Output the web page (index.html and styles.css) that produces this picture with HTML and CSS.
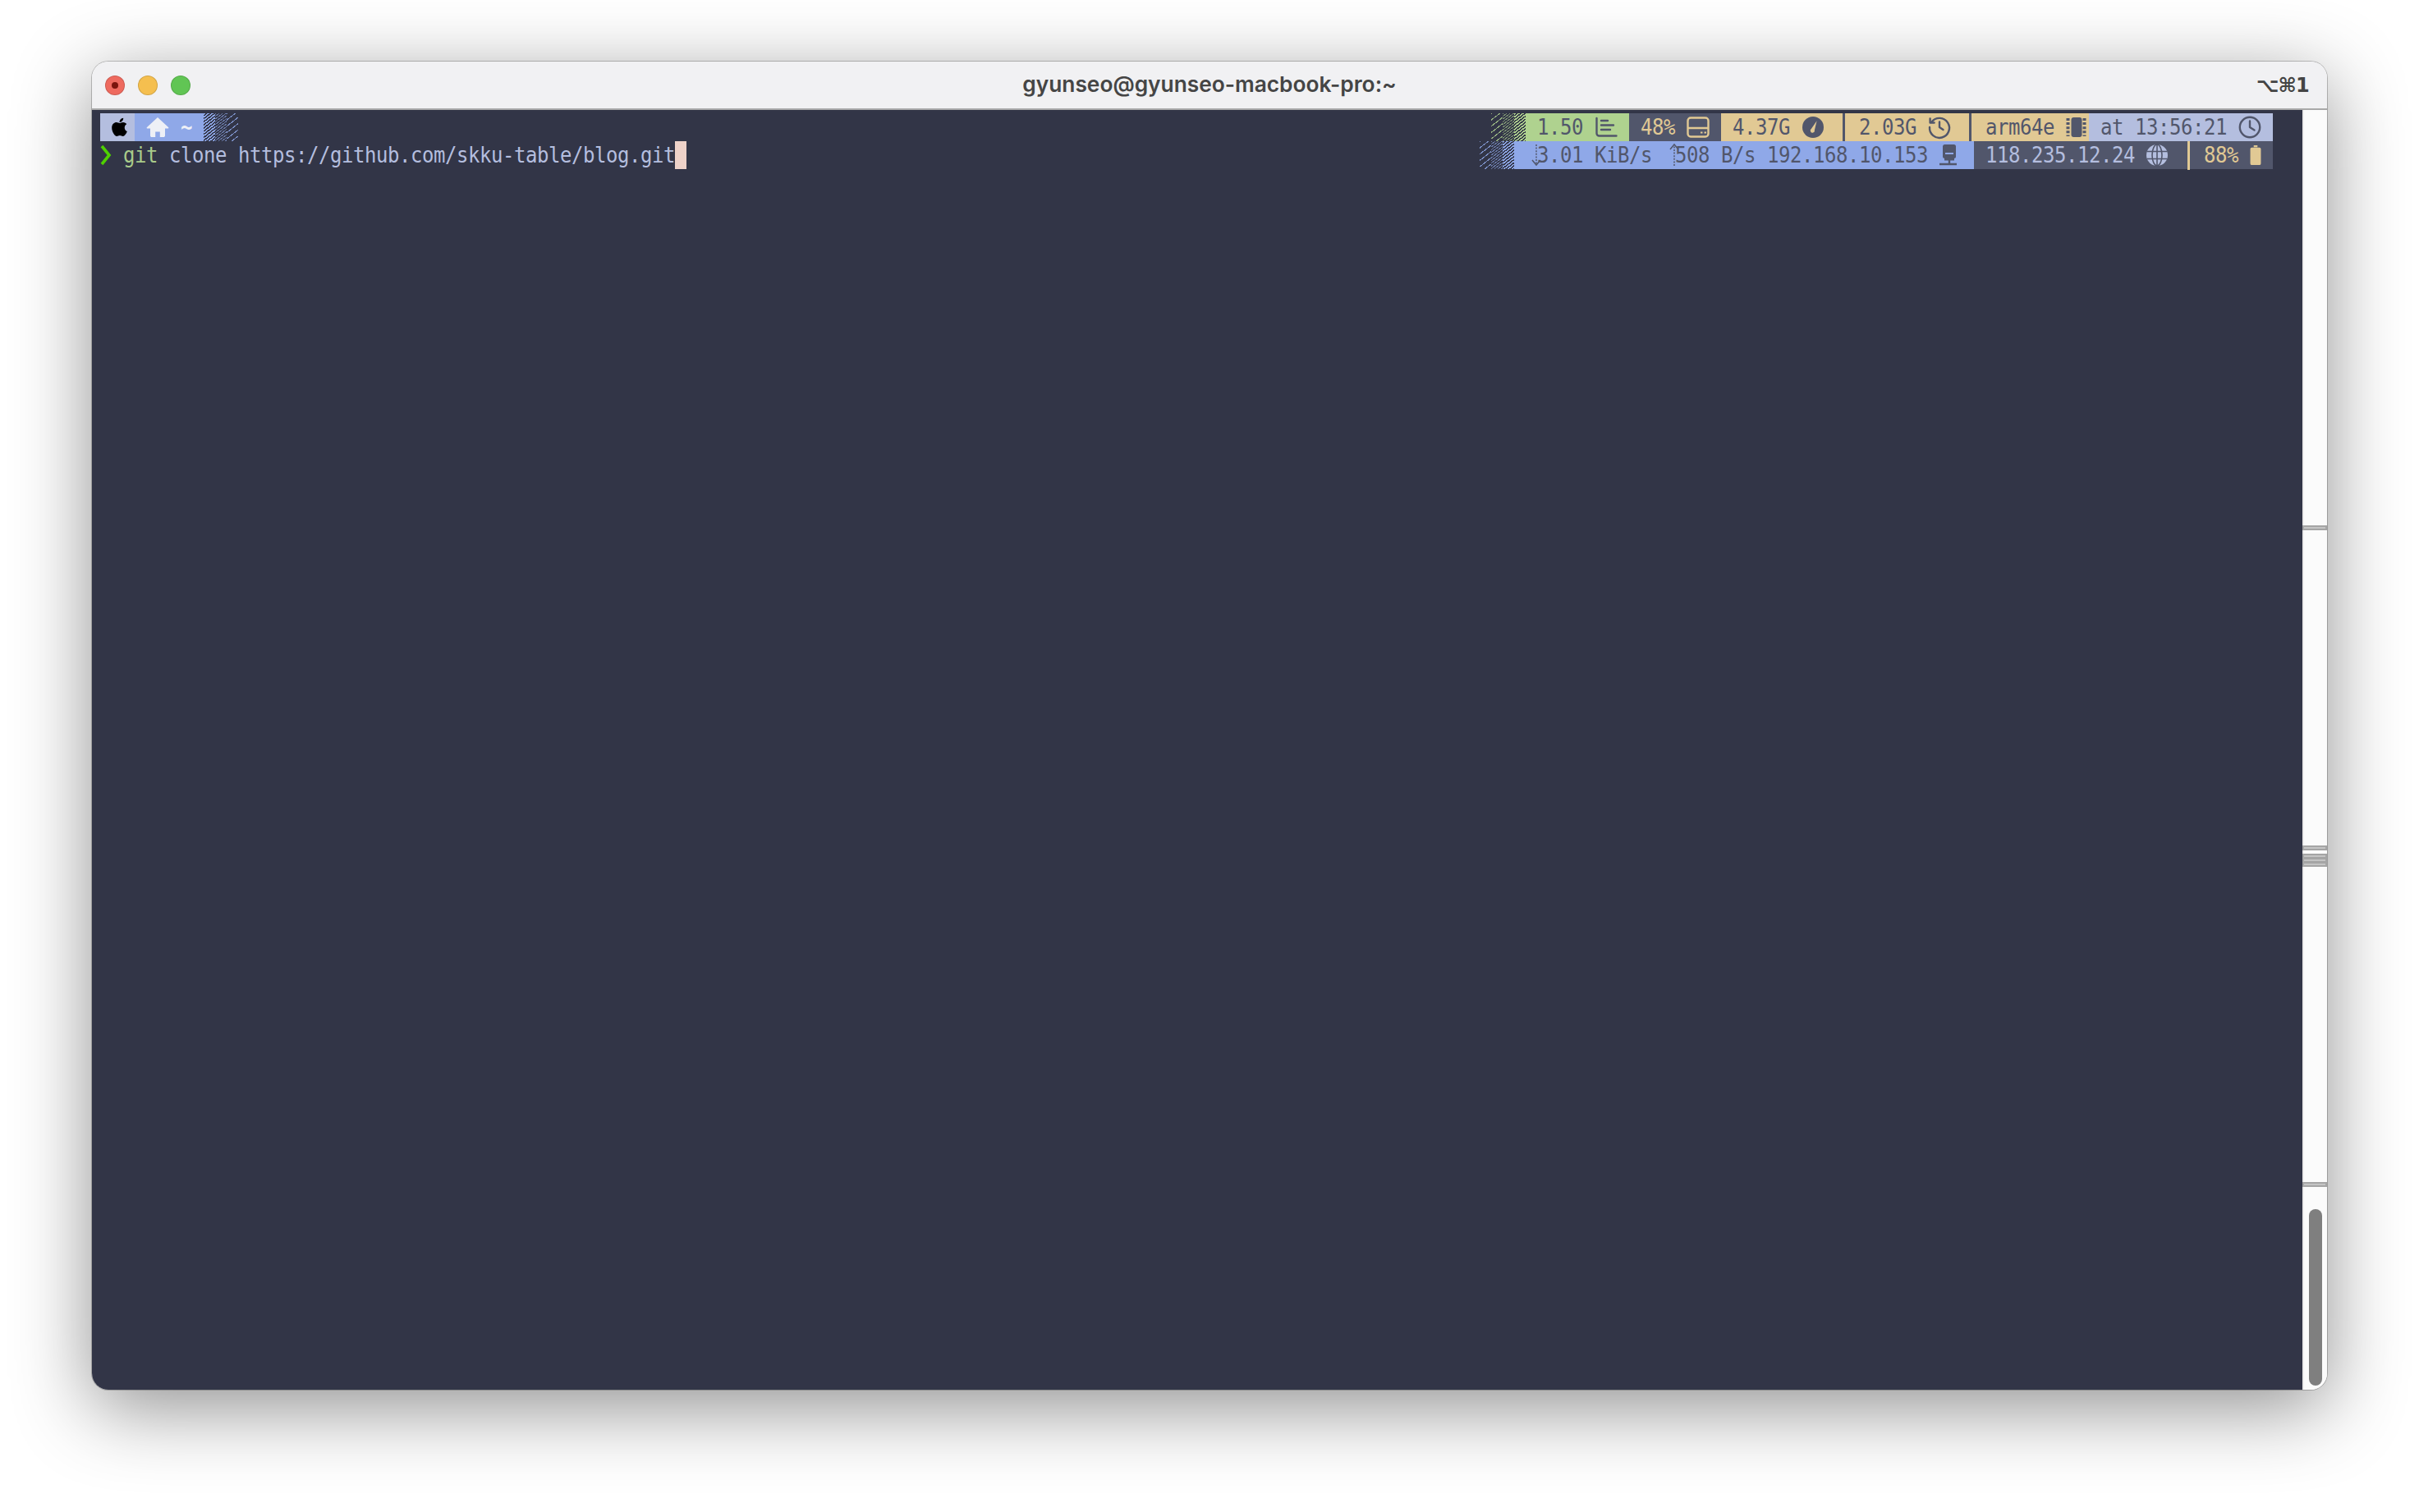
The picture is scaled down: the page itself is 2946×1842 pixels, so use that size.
FILE: index.html
```html
<!DOCTYPE html>
<html lang="en">
<head>
<meta charset="utf-8">
<title>gyunseo@gyunseo-macbook-pro:~</title>
<link rel="stylesheet" href="styles.css">
</head>
<body>
<main class="window">
  <header class="titlebar">
    <div class="lights">
      <span class="light red"></span>
      <span class="light yellow"></span>
      <span class="light green-light"></span>
    </div>
    <div class="title">gyunseo@gyunseo-macbook-pro:~</div>
    <div class="shortcut">⌥⌘1</div>
  </header>
  <div class="body">
    <section class="term">
      <div class="row">
        <div class="left">
          <div class="seg lav dark-text">
            <svg class="ico apple" viewBox="0 0 384 512"><path fill="#000" d="M318.7 268.7c-.2-36.7 16.4-64.4 50-84.8-18.8-26.9-47.2-41.7-84.7-44.6-35.5-2.8-74.3 20.7-88.5 20.7-15 0-49.4-19.7-76.4-19.7C63.3 141.2 4 184.8 4 273.5q0 39.3 14.4 81.2c12.8 36.7 59 126.7 107.2 125.2 25.2-.6 43-17.9 75.8-17.9 31.8 0 48.3 17.9 76.4 17.9 48.6-.7 90.4-82.5 102.6-119.3-65.2-30.7-61.7-90-61.7-91.9zm-56.6-164.2c27.3-32.4 24.8-61.9 24-72.5-24.1 1.4-52 16.4-67.9 34.9-17.5 19.8-27.8 44.3-25.6 71.9 26.1 2 49.9-11.4 69.5-34.3z"/></svg>
          </div>
          <div class="seg blue">
            <svg class="ico" viewBox="0 0 28 28"><path fill="#eef0f6" d="M14 2 1 13.900c-.7.7-.3 1.600.6 1.600H5v8.700c0 1 .8 1.800 1.800 1.800h4.400v-6.500h5.600V26h4.400c1 0 1.800-.8 1.800-1.800v-8.700h3.400c.9 0 1.300-.9.6-1.600z"/></svg>
            <span class="tilde">~</span>
          </div>
          <i class="hatch dense c-blue"></i><i class="hatch medium c-blue"></i><i class="hatch sparse c-blue"></i>
        </div>
        <div class="right">
          <i class="hatch sparse c-green"></i><i class="hatch medium c-green"></i><i class="hatch dense c-green"></i>
          <div class="seg green dark-text">
            <span>1.50</span>
            <svg class="ico" viewBox="0 0 28 28" fill="none" stroke="#51566b" stroke-width="2.4" stroke-linecap="round"><path d="M2.500 3v18.500a3 3 0 0 0 3 3h21"/><path d="M8 6h8M8 11.500h15M8 17h11"/></svg>
          </div>
          <div class="seg slate tan-text">
            <span>48%</span>
            <svg class="ico" viewBox="0 0 28 28" fill="none" stroke="#e1c994" stroke-width="2.4"><rect x="1.500" y="2.500" width="25" height="23" rx="3.500"/><path d="M1.500 15h25"/><path stroke-width="2.2" d="M17 20.500h2.500M21.500 20.500H24"/></svg>
          </div>
          <div class="seg tan flush dark-text">
            <span>4.37G</span>
            <svg class="ico" viewBox="0 0 28 28"><circle cx="14" cy="14" r="13" fill="#51566b"/><path fill="#e1c994" d="M18.600 6.300 15.900 17.400a2.600 2.600 0 1 1-3.900-1.600z"/></svg>
            <b class="divider on-tan"><u></u></b>
            <span>2.03G</span>
            <svg class="ico" viewBox="0 0 28 28" fill="none" stroke="#51566b" stroke-width="2.4" stroke-linecap="round" stroke-linejoin="round"><path d="M4.600 7.400A12 12 0 1 1 2 14"/><path d="M2.600 3.500v5h5"/><path d="M14 7.500V14l4.500 3"/></svg>
            <b class="divider on-tan"><u></u></b>
            <span>arm64e</span>
            <svg class="ico" viewBox="0 0 28 28"><rect x="6.500" y="2" width="13" height="24" rx="3" fill="#51566b"/><path stroke="#51566b" stroke-width="4" stroke-dasharray="3 2.100" d="M2.500 3v22M22.500 3v22"/></svg>
          </div>
          <div class="seg lav dark-text">
            <span>at 13:56:21</span>
            <svg class="ico" viewBox="0 0 28 28" fill="none" stroke="#51566b" stroke-width="2.4" stroke-linecap="round" stroke-linejoin="round"><circle cx="14" cy="14" r="12.200"/><path d="M14 6.500V14l5.500 3.500"/></svg>
          </div>
        </div>
      </div>
      <div class="row">
        <div class="left prompt-line">
          <svg class="chev" viewBox="0 0 14 34" fill="none" stroke="#4fd000" stroke-width="3.6"><path d="M2 6l9 11-9 11"/></svg><span class="cmd"> </span><span class="git">git</span><span class="cmd"> clone https://github.com/skku-table/blog.git</span><span class="cursor"> </span>
        </div>
        <div class="right">
          <i class="hatch sparse c-blue"></i><i class="hatch medium c-blue"></i><i class="hatch dense c-blue"></i>
          <div class="seg blue dark-text">
            <svg class="arrow" viewBox="0 0 12 34" fill="none" stroke="#51566b" stroke-width="1.500"><path stroke-dasharray="2 1.600" d="M6 4v24"/><path d="M1 23l5 6 5-6"/></svg><span>3.01 KiB/s </span><svg class="arrow" viewBox="0 0 12 34" fill="none" stroke="#51566b" stroke-width="1.500"><path stroke-dasharray="2 1.600" d="M6 30V6"/><path d="M1 10l5-6 5 6"/></svg><span>508 B/s 192.168.10.153</span>
            <svg class="ico" viewBox="0 0 28 28"><rect x="4" y="1" width="16" height="17" rx="2.500" fill="#51566b"/><path stroke="#8fa8e8" stroke-width="1.800" d="M7 12h10"/><path fill="#51566b" d="M6 18h12v2.500H6zM10.800 20h2.400v4h-2.400z"/><path stroke="#51566b" stroke-width="2.400" d="M0 25h21"/></svg>
          </div>
          <div class="seg slate lav-text">
            <span>118.235.12.24</span>
            <svg class="ico" viewBox="0 0 28 28"><circle cx="13" cy="14" r="13" fill="#b4bedf"/><g fill="none" stroke="#51566b" stroke-width="1.600"><ellipse cx="13" cy="14" rx="6" ry="13"/><path d="M13 1v26M.5 9.500h25M.5 18.500h25"/></g></svg>
            <b class="divider on-slate"><u></u></b>
            <span class="tan-text">88%</span>
            <svg class="ico narrow" viewBox="0 0 14 26"><path fill="#e1c994" d="M4.500 0h5v2.500h-5zM2 3h10a2 2 0 0 1 2 2v19a2 2 0 0 1-2 2H2a2 2 0 0 1-2-2V5a2 2 0 0 1 2-2z"/></svg>
          </div>
        </div>
      </div>
    </section>
    <aside class="scroll">
      <span class="mark m1"></span>
      <span class="mark m2"></span>
      <span class="mark m3"></span>
      <span class="mark m4"></span>
      <span class="thumb"></span>
    </aside>
  </div>
</main>
</body>
</html>
```
FILE: styles.css
```css
* { box-sizing: border-box; }
html, body { margin: 0; height: 100%; background: #fff; }
body { padding: 75px 112px 149px; overflow: hidden; }

.window {
  height: 1618px;
  display: flex;
  flex-direction: column;
  border-radius: 20px;
  box-shadow: 0 0 0 1px rgba(0,0,0,.22), 0 22px 95px rgba(0,0,0,.44);
}

.titlebar {
  height: 59px;
  flex: none;
  display: grid;
  grid-template-columns: 1fr auto 1fr;
  align-items: center;
  padding: 0 22px;
  background: #f1f1f3;
  border-bottom: 2px solid #a9a9a9;
  border-radius: 20px 20px 0 0;
}
.lights { display: flex; gap: 16px; margin-left: -6px; }
.light { width: 24px; height: 24px; border-radius: 50%; border: 1px solid rgba(0,0,0,.14); display: flex; align-items: center; justify-content: center; }
.red { background: #ee6a5f; }
.red::after { content: ""; width: 8px; height: 8px; border-radius: 50%; background: #7b150d; }
.yellow { background: #f5bf4f; }
.green-light { background: #61c554; }
.title { font: 600 26.3px/1 Inter, "Liberation Sans", sans-serif; color: #454545; }
.shortcut { justify-self: end; font: 700 24px/1 "DejaVu Sans", sans-serif; color: #444; letter-spacing: -.8px; }

.body { flex: 1; min-height: 0; display: flex; border-radius: 0 0 20px 20px; overflow: hidden; }
.term { flex: 1; padding: 4px 36px 0 10px; background: #323547; font: 24px/34px "DejaVu Sans Mono", monospace; letter-spacing: -.45px; }
.term span { white-space: pre; transform: scaleY(1.14); }
.scroll { width: 30px; flex: none; position: relative; background: #fbfbfb; border-left: 2px solid #ececec; }
.mark { position: absolute; left: -2px; right: 0; height: 6px; background: #c4c4c4; border: 2px solid #a5a5a5; }
.m1 { top: 506px; }
.m2 { top: 896px; }
.m3 { top: 906px; height: 16px; background: repeating-linear-gradient(#c4c4c4 0 2px, #a5a5a5 2px 5px); }
.m4 { top: 1306px; }
.thumb { position: absolute; left: 6px; width: 16px; top: 1339px; height: 215px; border-radius: 8px; background: #7f7f7f; }

.row { display: flex; justify-content: space-between; height: 34px; }
.left, .right, .seg { display: flex; align-items: center; height: 34px; }
.seg { padding: 0 14px; gap: 14px; }
.green { background: #afd28f; }
.slate { background: #51566b; }
.tan { background: #e1c994; }
.flush { padding-right: 0; }
.lav { background: #b4bedf; }
.blue { background: #8fa8e8; }
.right .blue { gap: 0; }
.right .blue > svg:last-child { margin-left: 14px; }
.dark-text { color: #51566b; }
.tan-text { color: #e1c994; }
.lav-text { color: #b4bedf; }

.ico { width: 28px; height: 28px; flex: none; overflow: visible; }
.apple { width: 19px; height: 25.6px; margin-right: -5px; }
.arrow { width: 12px; height: 34px; flex: none; margin: 0 -5px 0 7px; overflow: visible; }
.narrow { width: 14px; height: 24px; }
.tilde { width: 14px; font-weight: 700; color: #eef0f6; }

.divider { width: 14px; height: 34px; display: flex; justify-content: center; flex: none; }
.divider u { display: block; width: 3px; height: 35px; margin-left: 4px; }
.on-tan u { background: #51566b; }
.on-slate u { background: #e1c994; }

.hatch { display: block; width: 14px; height: 34px; flex: none; }
.c-blue { --c: #8fa8e8; }
.c-green { --c: #afd28f; }
.dense { background: repeating-linear-gradient(142deg, var(--c) 0 1.5px, rgba(0,0,0,0) 1.5px 3px); }
.medium { opacity: .6; background: repeating-linear-gradient(142deg, var(--c) 0 1px, rgba(0,0,0,0) 1px 2.6px); }
.sparse { opacity: .8; background: repeating-linear-gradient(142deg, var(--c) 0 1.1px, rgba(0,0,0,0) 1.1px 6px); }

.chev { width: 14px; height: 34px; flex: none; }
.cmd { color: #b4bedf; }
.git { color: #a9cb8a; }
.cursor { width: 14px; background: #eed2c9; transform: none !important; }
```
